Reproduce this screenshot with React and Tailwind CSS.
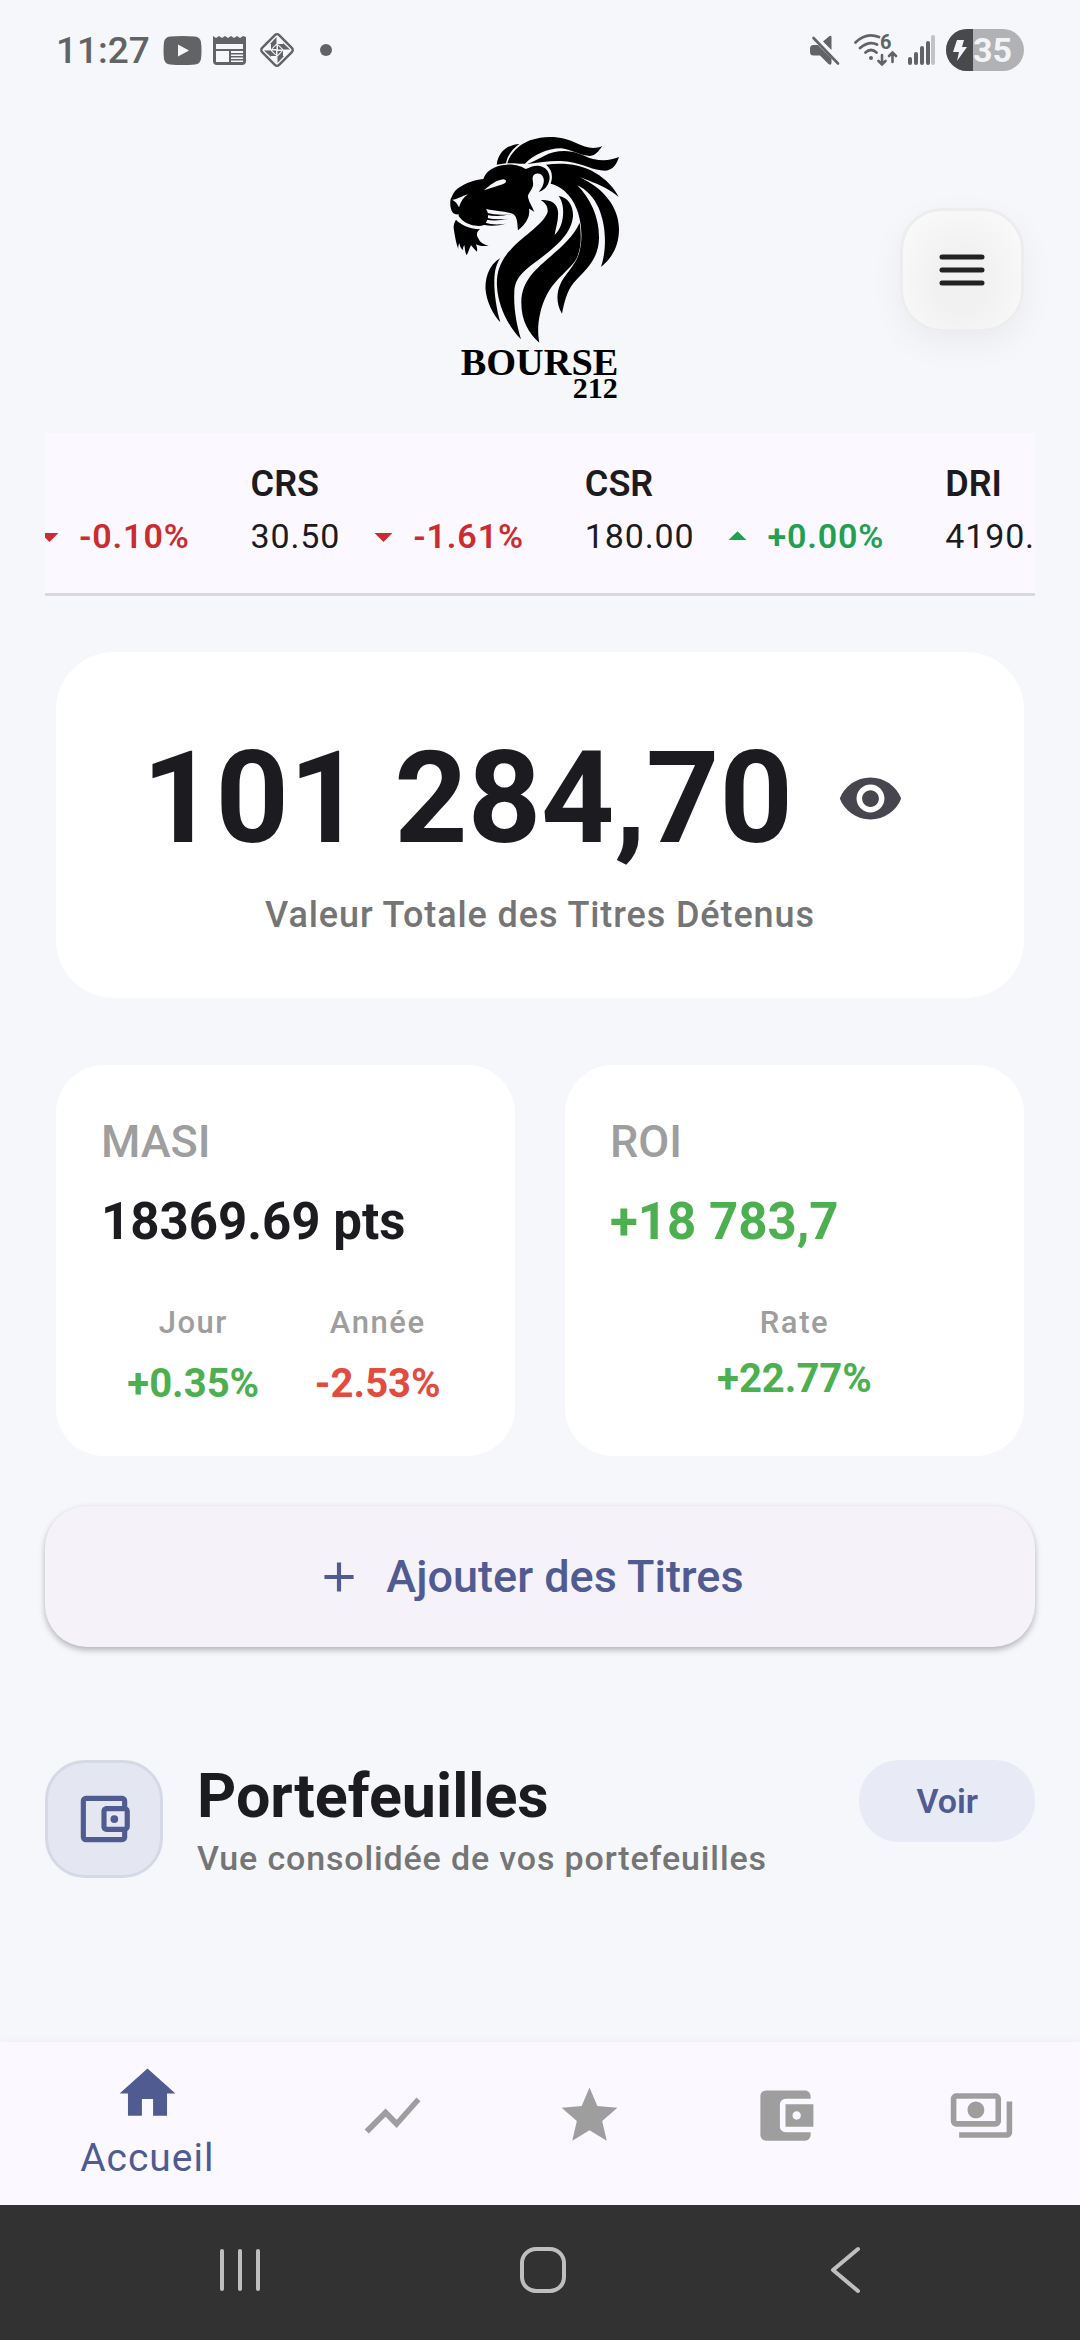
import { useState } from "react";
import {
  MdAccountBalanceWallet,
  MdAdd,
  MdArrowDropDown,
  MdArrowDropUp,
  MdHome,
  MdOutlineAccountBalanceWallet,
  MdOutlinePayments,
  MdShowChart,
  MdStar,
  MdVisibility,
  MdVisibilityOff,
} from "react-icons/md";

/* ---------- data ---------- */
const quotes = [
  { change: "-0.10%", up: false },
  { name: "CRS", price: "30.50", change: "-1.61%", up: false },
  { name: "CSR", price: "180.00", change: "+0.00%", up: true },
  { name: "DRI", price: "4190.00" },
];

const tabs = [
  { label: "Cours", icon: MdShowChart },
  { label: "Favoris", icon: MdStar },
  { label: "Portefeuille", icon: MdAccountBalanceWallet },
  { label: "Dividendes", icon: MdOutlinePayments },
];

/* ---------- phone status bar ---------- */
function StatusBar() {
  return (
    <div className="flex h-[100px] items-center justify-between px-14 text-[#626365]">
      <div className="flex items-center">
        <span className="w-[107px] text-[37px] leading-none font-medium">11:27</span>
        <svg className="h-[29px] w-[39px]" viewBox="0 0 39 29" fill="currentColor">
          <path fillRule="evenodd" d="M7 .5Q19.500 -.5 32 .5Q37 1 38 6Q39 14.500 38 23Q37 28 32 28.500Q19.500 29.500 7 28.500Q2 28 1 23Q0 14.500 1 6Q2 1 7 .5ZM15 8.500V20.500L26 14.500Z" />
        </svg>
        <svg className="ml-[11px] h-[30px] w-[33px]" viewBox="0 0 33 30" fill="currentColor">
          <path
            fillRule="evenodd"
            d="M0 1L3 3L6 1L9 3L12 1L15 3L18 1L21 3L24 1L27 3L30 1L33 2V26Q33 30 29 30H4Q0 30 0 26ZM3 9V14H30V9ZM3 16V27H16V16ZM18 16V18H30V16ZM18 19.500V21H30V19.500ZM18 22.500V24H30V22.500ZM18 25.500V27H30V25.500Z"
          />
        </svg>
        <svg className="ml-3 h-[38px] w-[38px]" viewBox="0 0 38 38" fill="currentColor">
          <rect x="7" y="7" width="24" height="24" rx="3" transform="rotate(45 19 19)" fill="none" stroke="currentColor" strokeWidth="2.400" />
          {[0, 90, 180, 270].map((r) => (
            <g key={r} transform={`rotate(${r} 19 19)`}>
              <path d="M18.500 6V13H12Z" />
              <path d="M19.500 13H25V18L22 15Z" />
              <path d="M18.500 14V18L14.500 18Z" />
            </g>
          ))}
        </svg>
        <span className="ml-6 h-3 w-3 rounded-full bg-current" />
      </div>

      <div className="flex items-center">
        <svg className="h-[31px] w-[31px]" viewBox="0 0 31 31" fill="currentColor">
          <path d="M0 13.500Q0 10 3.500 10H8L21.500 23.500V28Q21 31 18.500 29L10 20.500H3.500Q0 20.500 0 17ZM13 6.500L19.500 1Q21.500 0 21.500 2V15Z" />
          <path d="M3.500 3L28 28.500" stroke="currentColor" strokeWidth="2.600" strokeLinecap="round" />
        </svg>
        <svg className="ml-[13px] h-[34px] w-[45px] overflow-visible" viewBox="0 0 45 34" fill="none" stroke="currentColor" strokeWidth="2.800" strokeLinecap="round">
          <path d="M1.500 9.500Q12 -1 25 4M6 15Q15 7.500 23 11.500M11.500 19.500Q17 14.500 22.500 19.500" />
          <circle cx="17" cy="25" r="2" fill="currentColor" stroke="none" />
          <text x="26" y="16" fontSize="20" fontWeight="700" fontFamily="Roboto" fill="currentColor" stroke="none">6</text>
          <path d="M28 22V31M24.500 28L28 31.500L31.500 28M38.500 29V20M35 23L38.500 19.500L42 23" strokeWidth="2.600" />
        </svg>
        <svg className="ml-[9px] h-[30px] w-7" viewBox="0 0 28 30" fill="currentColor">
          <rect x="0" y="22" width="4" height="8" rx="2" />
          <rect x="6" y="17" width="4" height="13" rx="2" />
          <rect x="12" y="11" width="4" height="19" rx="2" />
          <rect x="18" y="6" width="4" height="24" rx="2" />
          <rect x="23" y="0" width="4" height="30" rx="2" opacity="0.35" />
        </svg>
        <div className="ml-[10px] flex h-[42px] w-[78px] overflow-hidden rounded-full bg-[#b1b2b6] text-[#f3f4f7]">
          <div className="flex w-[27px] items-center justify-center bg-[#48494b]">
            <svg className="h-[23px] w-4" viewBox="0 0 16 23" fill="currentColor">
              <path d="M5 1H12L10 8H15L5 22L7 13H1Z" />
            </svg>
          </div>
          <span className="text-[34px] leading-[43px] font-bold">35</span>
        </div>
      </div>
    </div>
  );
}

/* ---------- lion head with the brand name under it ---------- */
function Logo() {
  return (
    <svg className="h-[267px] w-[190px]" viewBox="45 48 570 801" fill="#000" role="img" aria-label="Bourse 212">
      {/* mane, top */}
      <path d="M268 72C232 74 205 96 200 134L228 130C232 108 245 88 268 72Z" />
      <path d="M232 130C238 106 262 76 300 61C350 43 405 50 440 70C465 82 490 90 517 78C505 95 497 106 480 108C450 107 425 90 395 85C355 84 310 105 285 131C270 133 250 128 232 130Z" />
      <path d="M292 132C312 124 330 114 342 108C365 96 395 90 425 95C450 99 465 110 490 117C520 124 545 120 567 111C560 132 550 151 525 152C490 152 460 132 420 126C385 119 340 124 292 132Z" />
      {/* mane, right side */}
      <path d="M348 134C400 128 450 132 495 158C530 178 553 205 566 231C545 213 515 197 488 187C475 181 460 175 450 172C520 205 568 262 567 330C566 380 545 415 513 441C530 390 530 320 505 262C490 230 468 208 442 196C480 235 508 290 507 355C506 420 465 450 430 490C410 515 402 550 396 581C380 555 379 525 388 500C400 465 435 440 447 400C462 350 455 270 415 225C400 207 385 197 362 191C370 165 365 148 348 134Z" />
      {/* mane, front */}
      <path d="M332 240C360 238 382 248 384 275C386 300 378 320 374 345C395 325 403 290 398 258C396 245 391 235 386 228C415 232 430 258 429 288C425 345 370 385 325 420C285 450 255 470 253 515C250 570 262 620 273 658C235 620 205 560 201 500C198 450 215 415 255 375C295 338 345 305 353 275C354 258 345 248 332 240Z" />
      <path d="M449 308C455 350 455 400 430 430C405 460 370 485 350 525C325 575 320 630 328 668C295 640 273 600 274 545C275 485 315 450 355 415C395 380 430 350 449 308Z" />
      <path d="M211 414C175 435 162 480 168 520C175 560 195 590 211 607C200 570 192 520 193 480C194 450 200 430 211 414Z" />
      {/* head */}
      <path
        fillRule="evenodd"
        d="M160 177C167 155 190 136 230 134C255 132 275 140 287 147C300 142 310 136 325 137C350 140 362 160 358 180C355 200 340 212 326 216C338 203 345 187 340 173C335 160 322 157 311 165C303 178 313 188 308 200C303 215 292 222 294 232C298 250 308 262 313 276C305 270 302 268 297 266C300 285 295 305 264 331C262 310 262 295 253 285C245 276 210 275 168 267C178 280 176 302 162 315C145 322 115 315 100 303C88 292 82 285 88 283C75 284 68 280 65 272C60 260 60 247 62 237C66 230 68 222 75 213C95 193 130 180 160 177ZM66 239C80 240 95 228 114 223C100 232 92 245 87 262C82 250 75 243 66 239ZM162 211C180 195 200 180 220 178C232 180 230 189 218 193C200 199 180 205 162 211Z"
      />
      <path d="M168 278Q205 288 243 282Q205 293 168 284ZM168 293Q200 301 236 296Q200 305 168 299ZM165 308Q192 317 228 311Q192 321 160 314Z" />
      {/* chin */}
      <path d="M78 299C90 312 115 326 150 328C140 335 138 345 145 355C150 368 162 375 176 377C160 379 148 379 138 373C140 380 143 387 141 395C135 390 128 382 123 376C118 386 115 397 110 406C105 397 105 388 103 375C100 380 98 385 100 391C93 387 90 380 88 370C85 376 84 382 85 388C78 370 74 345 71 325C70 315 74 305 78 299Z" />
      <text x="92" y="766" fontSize="115" fontWeight="700" fontFamily="Liberation Serif, serif">BOURSE</text>
      <text x="563" y="834" textAnchor="end" fontSize="90" fontWeight="700" fontFamily="Liberation Serif, serif">212</text>
    </svg>
  );
}

function Quote({ name, price, change, up }) {
  const Arrow = up ? MdArrowDropUp : MdArrowDropDown;
  return (
    <div className="shrink-0">
      <div className="h-10 text-[36px] leading-10 font-semibold">{name}</div>
      <div className="mt-3 flex h-10 items-center text-[34px] leading-10 font-medium tracking-wide">
        {price && <span className="mr-[22px] font-normal">{price}</span>}
        {change && (
          <span className={`flex items-center font-semibold ${up ? "text-[#22a052]" : "text-[#cb2c30]"}`}>
            <Arrow className="mr-2 size-[43px]" />
            {change}
          </span>
        )}
      </div>
    </div>
  );
}

function Stat({ label, value, color, gap = "mt-[17px]" }) {
  return (
    <div className="text-center">
      <div className="text-[31px] leading-10 font-medium tracking-wider text-[#9e9e9e]">{label}</div>
      <div className={`${gap} text-[40px] leading-12 font-bold ${color}`}>{value}</div>
    </div>
  );
}

function IndexCard({ title, value, valueColor, children }) {
  return (
    <article className="rounded-[48px] bg-white px-[45px] pt-[49px] pb-12">
      <h2 className="text-[45px] leading-14 font-medium text-[#9e9e9e]">{title}</h2>
      <p className={`mt-[22px] text-[51px] leading-[60px] font-bold ${valueColor}`}>{value}</p>
      <div className="mt-[51px] grid auto-cols-fr grid-flow-col">{children}</div>
    </article>
  );
}

/* ---------- Android navigation ---------- */
function SystemNav() {
  return (
    <div className="grid h-[135px] grid-cols-3 place-items-center bg-[#323232] pr-[84px] pb-[5px] pl-[90px]">
      <button type="button" aria-label="Applications récentes">
        <svg className="h-12 w-12" viewBox="0 0 48 48" stroke="#bfbfbf" strokeWidth="4" strokeLinecap="round">
          <path d="M5 5V43M23 5V43M41 5V43" />
        </svg>
      </button>
      <button type="button" aria-label="Écran d'accueil">
        <svg className="h-12 w-12" viewBox="0 0 48 48" fill="none" stroke="#bfbfbf" strokeWidth="4">
          <rect x="3" y="3" width="42" height="42" rx="14" />
        </svg>
      </button>
      <button type="button" aria-label="Retour">
        <svg className="h-12 w-12" viewBox="0 0 48 48" fill="none" stroke="#bfbfbf" strokeWidth="4" strokeLinecap="round" strokeLinejoin="round">
          <path d="M37 3L12 24L37 45" />
        </svg>
      </button>
    </div>
  );
}

export default function App() {
  const [visible, setVisible] = useState(true);

  return (
    <div className="flex min-h-screen flex-col bg-[#f5f7fb] font-['Roboto',sans-serif] text-[#1c1b20]">
      <StatusBar />

      <header className="grid grid-cols-[1fr_auto_1fr] items-center px-14 pt-9">
        <span />
        <Logo />
        <button
          type="button"
          aria-label="Menu"
          className="flex size-[124px] items-center justify-center justify-self-end rounded-[42px] border-3 border-[#ededed] bg-radial-[at_50%_60%] from-[#f1f1f1] from-30% to-[#fafafa] to-90% text-[#222] shadow-[0_12px_34px_rgba(0,0,0,0.05)]"
        >
          <svg className="h-8 w-[46px]" viewBox="0 0 46 32" stroke="currentColor" strokeWidth="5" strokeLinecap="round">
            <path d="M3 3H43M3 16H43M3 29H43" />
          </svg>
        </button>
      </header>

      <main className="flex-1 px-[45px] pt-[30px]">
        <section aria-label="Cours en direct" className="overflow-hidden border-b-3 border-[#d8d8de] bg-[#fbf9ff] pt-[31px] pb-[37px]">
          <div className="-ml-[17px] flex gap-[61px]">
            {quotes.map((q) => <Quote key={q.name ?? q.change} {...q} />)}
          </div>
        </section>

        <div className="mt-14 px-[11px]">
          <section className="rounded-[58px] bg-white px-11 pt-[79px] pb-[59px]">
            <div className="flex items-center justify-center gap-[10px]">
              <span className="text-[128px] leading-[135px] font-bold whitespace-nowrap">
                {visible ? "101 284,70" : "••••••"}
              </span>
              <button
                type="button"
                aria-label="Masquer la valeur"
                onClick={() => setVisible(!visible)}
                className="flex size-[135px] items-center justify-center text-[#47464f]"
              >
                {visible ? <MdVisibility className="size-[67px]" /> : <MdVisibilityOff className="size-[67px]" />}
              </button>
            </div>
            <p className="mt-[25px] text-center text-[36px] leading-12 font-medium tracking-wide text-[#757575]">
              Valeur Totale des Titres Détenus
            </p>
          </section>

          <div className="mt-[67px] grid grid-cols-2 gap-[50px]">
            <IndexCard title="MASI" value="18369.69 pts" valueColor="text-[#1c1b20]">
              <Stat label="Jour" value="+0.35%" color="text-[#4caf50]" />
              <Stat label="Année" value="-2.53%" color="text-[#e34b3e]" />
            </IndexCard>
            <IndexCard title="ROI" value="+18 783,7" valueColor="text-[#4caf50]">
              <Stat label="Rate" value="+22.77%" color="text-[#4caf50]" gap="mt-3" />
            </IndexCard>
          </div>
        </div>

        <button
          type="button"
          className="mt-[50px] flex h-[141px] w-full items-center justify-center gap-[22px] rounded-[42px] bg-[#f5f2fa] pr-[22px] text-[45px] leading-none font-medium text-[#505b92] shadow-[0_3px_6px_rgba(0,0,0,0.28)]"
        >
          <MdAdd className="size-[50px]" />
          Ajouter des Titres
        </button>

        <section className="mt-[113px] flex items-start">
          <div className="flex size-[118px] shrink-0 items-center justify-center rounded-[40px] border-3 border-[#d5d9e6] bg-[#e4e7f1] text-[#505b92]">
            <MdOutlineAccountBalanceWallet className="size-[62px]" />
          </div>
          <div className="ml-[34px] flex-1">
            <h2 className="text-[61px] leading-[72px] font-bold">Portefeuilles</h2>
            <p className="mt-1 text-[34px] leading-11 font-medium tracking-wide text-[#757575]">
              Vue consolidée de vos portefeuilles
            </p>
          </div>
          <a
            href="#portefeuilles"
            className="flex h-[82px] items-center rounded-[40px] bg-[#e8ebf5] px-[57px] text-[34px] leading-none font-semibold text-[#505b92]"
          >
            Voir
          </a>
        </section>
      </main>

      <nav className="flex h-[163px] bg-[#fbf9ff] shadow-[0_-2px_8px_rgba(0,0,0,0.03)]">
        <a href="#accueil" aria-current="page" className="flex flex-3 flex-col items-center pt-[18px] text-[39px] leading-12 text-[#505b92]">
          <MdHome className="size-[67px]" />
          <span className="mt-[7px] block leading-12 tracking-wide">Accueil</span>
        </a>
        {tabs.map(({ label, icon: Icon }) => (
          <a key={label} href={`#${label.toLowerCase()}`} aria-label={label} className="flex flex-2 items-center justify-center pb-4 text-[#9e9e9e]">
            <Icon className="size-[67px]" />
          </a>
        ))}
      </nav>
      <SystemNav />
    </div>
  );
}
